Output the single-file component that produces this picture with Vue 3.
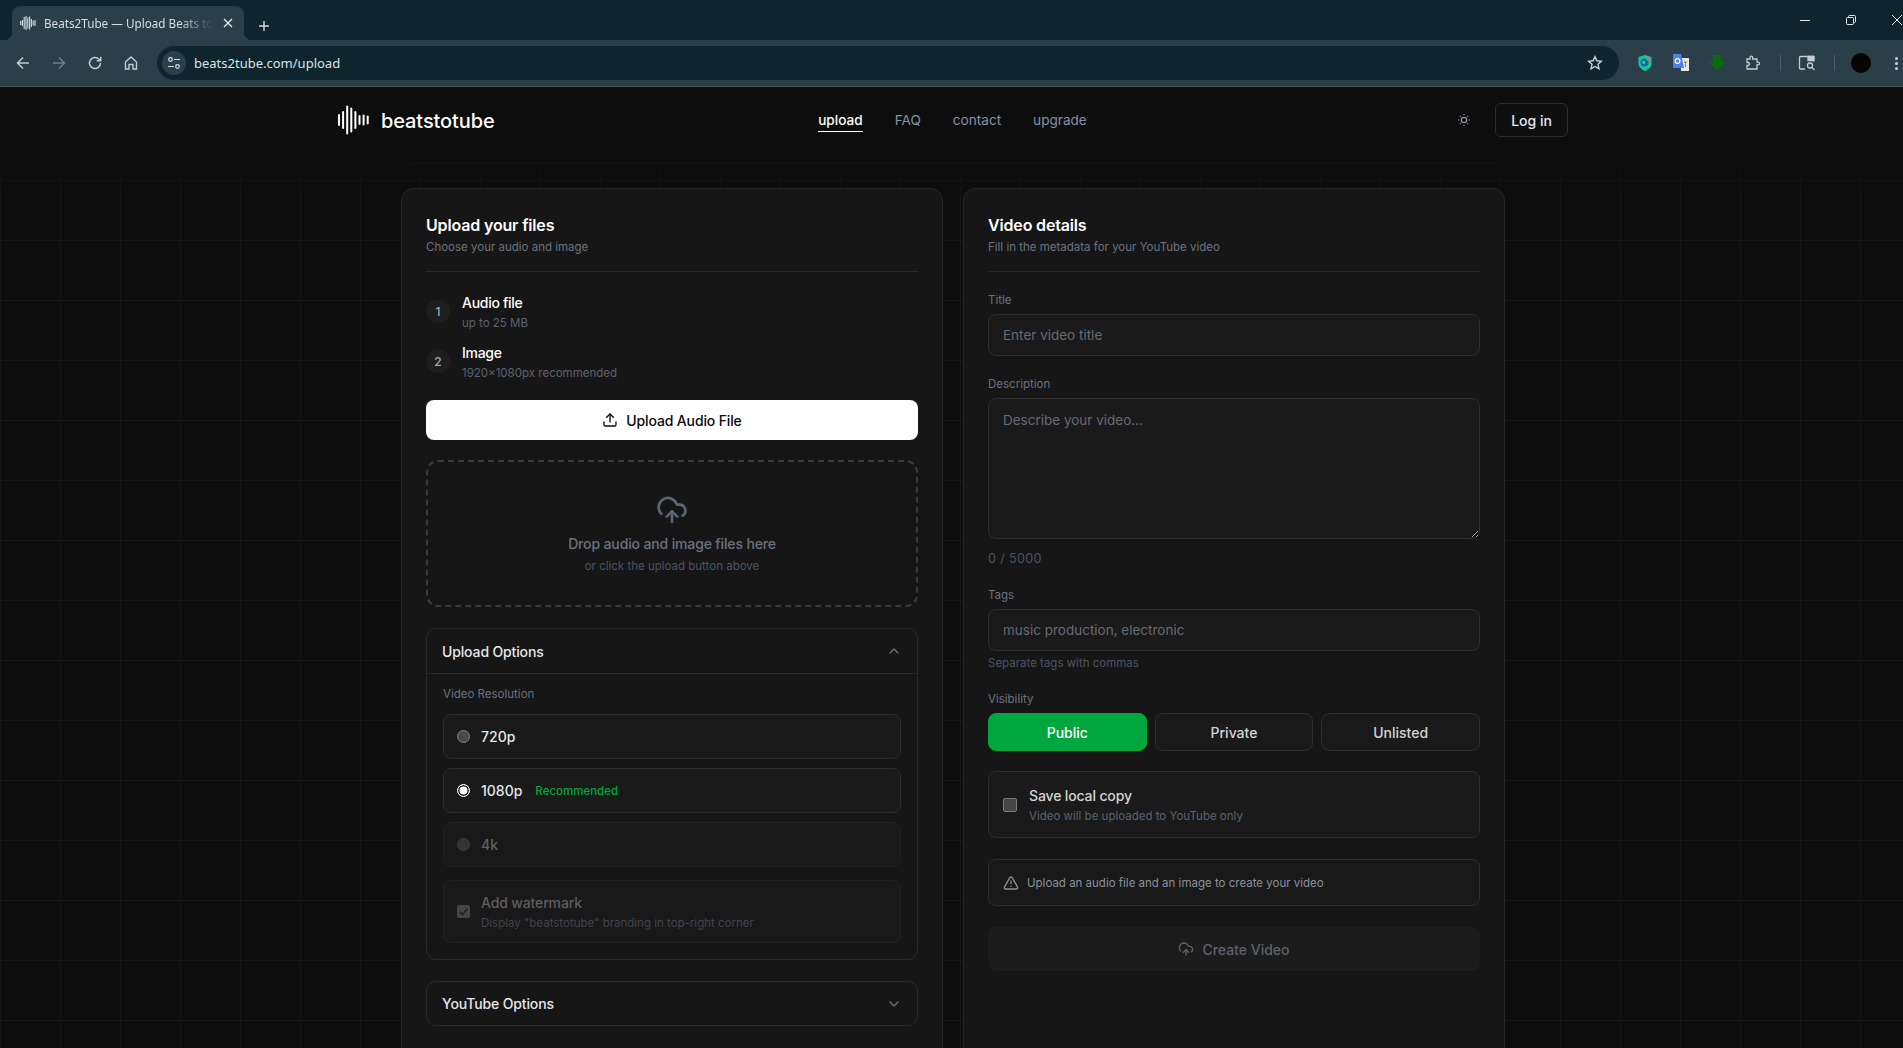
<script setup>
import { ref } from "vue";

// bar heights for the waveform logo, centred on one line
const logoBars = [12, 18, 29, 25, 18, 10, 11, 9];
const tabBars = [4, 6, 12, 14, 11, 13, 8, 5, 6];

const steps = [
  { n: 1, title: "Audio file", sub: "up to 25 MB" },
  { n: 2, title: "Image", sub: "1920×1080px recommended" },
];

const navLinks = ["upload", "FAQ", "contact", "upgrade"];
const resolution = ref("1080p");
const visibility = ref("Public");
const visibilityOptions = ["Public", "Private", "Unlisted"];
const saveLocal = ref(false);
const title = ref("");
const description = ref("");
const tags = ref("");
</script>

<template>
  <div class="window">
    <div class="tabstrip">
      <div class="tab">
        <svg class="favicon" width="16" height="14" viewBox="0 0 16 14">
          <rect
            v-for="(h, i) in tabBars"
            :key="i"
            :x="i * 1.8"
            :y="7 - h / 2"
            width="1.2"
            :height="h"
            fill="#c9d2d6"
          />
        </svg>
        <span class="tab-title">Beats2Tube — Upload Beats to</span>
        <svg class="tab-close" width="10" height="10" viewBox="0 0 10 10">
          <path d="M1 1l8 8M9 1l-8 8" stroke="#e3e8ea" stroke-width="1.4" />
        </svg>
      </div>
      <svg class="new-tab" width="12" height="12" viewBox="0 0 12 12">
        <path d="M6 1v10M1 6h10" stroke="#d5dcdf" stroke-width="1.4" />
      </svg>
      <div class="win-controls">
        <svg width="12" height="12" viewBox="0 0 12 12"><path d="M1 6.5h10" stroke="#e6eaec" /></svg>
        <svg width="12" height="12" viewBox="0 0 12 12" fill="none" stroke="#e6eaec">
          <rect x="1.5" y="3.5" width="7" height="7" rx="1" />
          <path d="M3.5 3.5v-1a1 1 0 0 1 1-1h5a1 1 0 0 1 1 1v5a1 1 0 0 1-1 1h-1" />
        </svg>
        <svg width="12" height="12" viewBox="0 0 12 12"><path d="M1 1l10 10M11 1L1 11" stroke="#e6eaec" /></svg>
      </div>
    </div>

    <div class="toolbar">
      <svg class="tool" width="16" height="16" viewBox="0 0 16 16" fill="none" stroke="#c3ced3" stroke-width="1.5">
        <path d="M14 8H2.5M8 2.5 2.5 8 8 13.5" />
      </svg>
      <svg class="tool" width="16" height="16" viewBox="0 0 16 16" fill="none" stroke="#6d7f87" stroke-width="1.5">
        <path d="M2 8h11.5M8 2.5 13.5 8 8 13.5" />
      </svg>
      <svg class="tool" width="16" height="16" viewBox="0 0 16 16" fill="none" stroke="#c3ced3" stroke-width="1.5">
        <path d="M13.5 8A5.5 5.5 0 1 1 11.8 4L13.5 5.6" />
        <path d="M13.7 1.8v4h-4" />
      </svg>
      <svg class="tool" width="16" height="16" viewBox="0 0 16 16" fill="none" stroke="#c3ced3" stroke-width="1.4">
        <path d="M2.5 7 8 2l5.5 5v7H10V9.5H6V14H2.5z" />
      </svg>
      <div class="omnibox">
        <span class="site-chip">
          <svg width="14" height="14" viewBox="0 0 14 14" fill="none" stroke="#d5dde0" stroke-width="1.2">
            <circle cx="3.5" cy="3.5" r="1.8" />
            <path d="M7 3.5h6M1 10.5h6" />
            <circle cx="10.5" cy="10.5" r="1.8" />
          </svg>
        </span>
        <span class="url">beats2tube.com/upload</span>
        <svg class="star" width="16" height="16" viewBox="0 0 16 16" fill="none" stroke="#c9d2d6" stroke-width="1.4">
          <path d="M8 1.6l1.9 4.2 4.5.5-3.4 3 1 4.5L8 11.5l-4 2.3 1-4.5-3.4-3 4.5-.5z" />
        </svg>
      </div>
      <div class="extensions">
        <span class="ext">
          <svg width="16" height="18" viewBox="0 0 16 18">
            <path d="M8 1l6.5 2v6c0 4-3 6.5-6.5 8C4.5 15.5 1.5 13 1.5 9V3z" fill="#16c79a" />
            <circle cx="7.5" cy="8.5" r="4" fill="#1468a8" />
            <path d="M5 7h3v3H6z" fill="#38d27c" />
            <circle cx="11.5" cy="5.5" r="1.8" fill="#e9647a" />
          </svg>
        </span>
        <span class="ext">
          <svg width="18" height="18" viewBox="0 0 18 18">
            <path d="M8 4h9v13H9z" fill="#e6e6e6" />
            <path d="M1 0h8l3 14H1z" fill="#4a80e8" />
            <circle cx="5.5" cy="7" r="2.4" fill="none" stroke="#fff" stroke-width="1.2" />
            <path d="M12 8h3M13.5 8v5" stroke="#777" stroke-width="1" />
          </svg>
        </span>
        <span class="ext">
          <svg width="18" height="16" viewBox="0 0 18 16">
            <path d="M5 0h8v7h4l-8 8.5L1 7h4z" fill="#0a6b0a" />
          </svg>
        </span>
        <span class="ext">
          <svg width="16" height="16" viewBox="0 0 16 16" fill="none" stroke="#c3ced3" stroke-width="1.3">
            <path d="M2 4h3V2.5a1.3 1.3 0 0 1 2.6 0V4H12v3.2h1.2a1.3 1.3 0 0 1 0 2.6H12V14H2v-3.5h1a1.5 1.5 0 0 0 0-3H2z" />
          </svg>
        </span>
        <span class="ext-sep"><i></i></span>
        <span class="ext">
          <svg width="18" height="16" viewBox="0 0 18 16" fill="none" stroke="#c3ced3" stroke-width="1.3">
            <path d="M7 14H2.5a1 1 0 0 1-1-1V2.5a1 1 0 0 1 1-1H15.5v5" />
            <path d="M10 1.5h6v4h-6z" fill="#c3ced3" />
            <circle cx="12" cy="10.5" r="2.5" />
            <path d="M14 12.5l2.5 2.5" />
          </svg>
        </span>
        <span class="ext-sep"><i></i></span>
        <span class="ext"><span class="avatar"></span></span>
        <span class="dots"><i></i><i></i><i></i></span>
      </div>
    </div>

    <div class="page">
      <header class="site-header">
        <div class="brand">
          <svg class="brand-mark" width="32" height="30" viewBox="0 0 32 30">
            <rect
              v-for="(h, i) in logoBars"
              :key="i"
              :x="1 + i * 4.1"
              :y="15 - h / 2"
              width="2"
              :height="h"
              rx="1"
              fill="#fff"
            />
          </svg>
          <span class="brand-name">beatstotube</span>
        </div>
        <nav class="nav">
          <a v-for="(link, i) in navLinks" :key="link" :class="{ active: i === 0 }">{{ link }}</a>
        </nav>
        <div class="header-right">
          <svg width="16" height="16" viewBox="0 0 24 24" fill="none" stroke="#8d96a3" stroke-width="2" stroke-linecap="round">
            <circle cx="12" cy="12" r="4" />
            <path d="M12 4h.01M20 12h.01M12 20h.01M4 12h.01M17.657 6.343h.01M17.657 17.657h.01M6.343 17.657h.01M6.343 6.343h.01" />
          </svg>
          <button class="login">Log in</button>
        </div>
      </header>

      <div class="stage">
        <div class="stage-edge"></div>
        <main class="columns">
          <section class="card">
            <div class="card-head">
              <h2>Upload your files</h2>
              <p>Choose your audio and image</p>
            </div>

            <div class="steps">
              <div v-for="step in steps" :key="step.n" class="step">
                <span class="step-num">{{ step.n }}</span>
                <div class="step-text">
                  <div class="step-title">{{ step.title }}</div>
                  <div class="step-sub">{{ step.sub }}</div>
                </div>
              </div>
            </div>

            <button class="upload-btn">
              <svg width="16" height="16" viewBox="0 0 24 24" fill="none" stroke="currentColor" stroke-width="2" stroke-linecap="round" stroke-linejoin="round">
                <path d="M12 3v12" />
                <path d="m17 8-5-5-5 5" />
                <path d="M21 15v4a2 2 0 0 1-2 2H5a2 2 0 0 1-2-2v-4" />
              </svg>
              Upload Audio File
            </button>

            <div class="dropzone">
              <svg width="32" height="32" viewBox="0 0 24 24" fill="none" stroke="#5d6675" stroke-width="2" stroke-linecap="round" stroke-linejoin="round">
                <path d="M12 13v8" />
                <path d="M4 14.899A7 7 0 1 1 15.71 8h1.79a4.5 4.5 0 0 1 2.5 8.242" />
                <path d="m8 17 4-4 4 4" />
              </svg>
              <div class="drop-title">Drop audio and image files here</div>
              <div class="drop-sub">or click the upload button above</div>
            </div>

            <div class="panel">
              <div class="panel-head with-line">
                <span>Upload Options</span>
                <svg width="16" height="16" viewBox="0 0 24 24" fill="none" stroke="#6b7280" stroke-width="2" stroke-linecap="round" stroke-linejoin="round">
                  <path d="m18 15-6-6-6 6" />
                </svg>
              </div>
              <div class="panel-body">
                <div class="field-label">Video Resolution</div>
                <div class="res-list">
                  <div class="res-row">
                    <span class="radio"></span>
                    <span class="res-name">720p</span>
                  </div>
                  <div class="res-row">
                    <span class="radio on"></span>
                    <span class="res-name">{{ resolution }}</span>
                    <span class="recommended">Recommended</span>
                  </div>
                  <div class="res-row disabled">
                    <span class="radio off"></span>
                    <span class="res-name">4k</span>
                  </div>
                </div>
                <div class="watermark">
                  <span class="checkbox checked">
                    <svg width="11" height="11" viewBox="0 0 12 12" fill="none" stroke="#232323" stroke-width="2">
                      <path d="M2 6.5 5 9.5 10 3" />
                    </svg>
                  </span>
                  <div>
                    <div class="wm-title">Add watermark</div>
                    <div class="wm-sub">Display "beatstotube" branding in top-right corner</div>
                  </div>
                </div>
              </div>
            </div>

            <div class="panel second">
              <div class="panel-head">
                <span>YouTube Options</span>
                <svg width="16" height="16" viewBox="0 0 24 24" fill="none" stroke="#6b7280" stroke-width="2" stroke-linecap="round" stroke-linejoin="round">
                  <path d="m6 9 6 6 6-6" />
                </svg>
              </div>
            </div>
          </section>

          <section class="card">
            <div class="card-head">
              <h2>Video details</h2>
              <p>Fill in the metadata for your YouTube video</p>
            </div>

            <div class="form">
              <label class="field-label">Title</label>
              <input v-model="title" class="text-input" placeholder="Enter video title" />

              <label class="field-label gap">Description</label>
              <textarea v-model="description" class="text-input area" placeholder="Describe your video…"></textarea>
              <div class="counter">{{ description.length }} / 5000</div>

              <label class="field-label gap">Tags</label>
              <input v-model="tags" class="text-input" placeholder="music production, electronic" />
              <div class="hint">Separate tags with commas</div>

              <label class="field-label gap">Visibility</label>
              <div class="vis-row">
                <button
                  v-for="opt in visibilityOptions"
                  :key="opt"
                  class="vis-btn"
                  :class="{ selected: visibility === opt }"
                  @click="visibility = opt"
                >
                  {{ opt }}
                </button>
              </div>

              <div class="save-box" @click="saveLocal = !saveLocal">
                <span class="checkbox empty"></span>
                <div>
                  <div class="save-title">Save local copy</div>
                  <div class="save-sub">Video will be uploaded to YouTube only</div>
                </div>
              </div>

              <div class="notice">
                <svg width="16" height="16" viewBox="0 0 24 24" fill="none" stroke="#8b919b" stroke-width="2" stroke-linecap="round" stroke-linejoin="round">
                  <path d="m21.73 18-8-14a2 2 0 0 0-3.48 0l-8 14A2 2 0 0 0 4 21h16a2 2 0 0 0 1.73-3" />
                  <path d="M12 9v4" />
                  <path d="M12 17h.01" />
                </svg>
                <span>Upload an audio file and an image to create your video</span>
              </div>

              <button class="create-btn">
                <svg width="16" height="16" viewBox="0 0 24 24" fill="none" stroke="currentColor" stroke-width="2" stroke-linecap="round" stroke-linejoin="round">
                  <path d="M12 13v8" />
                  <path d="M4 14.899A7 7 0 1 1 15.71 8h1.79a4.5 4.5 0 0 1 2.5 8.242" />
                  <path d="m8 17 4-4 4 4" />
                </svg>
                Create Video
              </button>
            </div>
          </section>
        </main>
      </div>
    </div>
  </div>
</template>

<style>
html,
body {
  margin: 0;
  overflow: hidden;
  background: #0d0d0d;
}
</style>

<style scoped>
.window {
  height: 100vh;
  display: flex;
  flex-direction: column;
  overflow: hidden;
  font-family: Inter, "Liberation Sans", sans-serif;
}

/* browser chrome */
.tabstrip {
  height: 40px;
  flex: none;
  display: flex;
  align-items: flex-end;
  background: #0f252d;
  padding-left: 12px;
}
.tab {
  position: relative;
  width: 232px;
  height: 34px;
  box-sizing: border-box;
  display: flex;
  align-items: center;
  padding: 0 11px 0 8px;
  background: #2a3f47;
  border-radius: 8px 8px 0 0;
}
.tab::before,
.tab::after {
  content: "";
  position: absolute;
  bottom: 0;
  width: 8px;
  height: 8px;
}
.tab::before {
  left: -8px;
  background: radial-gradient(circle at 0 0, transparent 8px, #2a3f47 8.5px);
}
.tab::after {
  right: -8px;
  background: radial-gradient(circle at 100% 0, transparent 8px, #2a3f47 8.5px);
}
.favicon {
  flex: none;
}
.tab-title {
  margin-left: 8px;
  flex: 1;
  white-space: nowrap;
  font: 11.7px "Noto Sans", sans-serif;
  color: #d7dfe2;
  -webkit-mask-image: linear-gradient(90deg, #000 80%, transparent);
  mask-image: linear-gradient(90deg, #000 80%, transparent);
}
.tab-close {
  margin-left: 10px;
  flex: none;
}
.new-tab {
  margin: 0 0 8px 14px;
}
.win-controls {
  margin-left: auto;
  align-self: stretch;
  display: flex;
  align-items: center;
  gap: 34px;
}
.toolbar {
  height: 47px;
  box-sizing: border-box;
  flex: none;
  display: flex;
  align-items: center;
  background: #2a3f47;
  border-bottom: 1px solid #45565d;
  padding-left: 15px;
}
.tool {
  margin-right: 20px;
  flex: none;
}
.omnibox {
  margin-left: -2px;
  width: 1462px;
  height: 34px;
  flex: none;
  display: flex;
  align-items: center;
  background: #0f252d;
  border-radius: 17px;
  padding: 0 16px 0 5px;
  box-sizing: border-box;
}
.site-chip {
  width: 24px;
  height: 24px;
  border-radius: 50%;
  background: #2a3f47;
  display: flex;
  align-items: center;
  justify-content: center;
}
.url {
  margin-left: 8px;
  font: 13px "Noto Sans", sans-serif;
  color: #d7e2e6;
}
.star {
  margin-left: auto;
}
.extensions {
  margin-left: 8px;
  display: flex;
  align-items: center;
}
.ext {
  width: 36px;
  display: flex;
  align-items: center;
  justify-content: center;
}
.ext-sep {
  width: 18px;
  display: flex;
  justify-content: center;
}
.ext-sep i {
  width: 1px;
  height: 16px;
  background: #4c5e65;
}
.avatar {
  width: 20px;
  height: 20px;
  border-radius: 50%;
  background: #050505;
}
.dots {
  display: flex;
  flex-direction: column;
  gap: 2px;
  margin-left: 16px;
}
.dots i {
  width: 3px;
  height: 3px;
  border-radius: 50%;
  background: #c9d2d6;
}

/* site */
.page {
  flex: 1;
  min-height: 0;
  background: #0d0d0d;
}
.site-header {
  height: 66px;
  box-sizing: border-box;
  padding-left: 337px;
  padding-right: 335px;
  display: grid;
  grid-template-columns: 1fr auto 1fr;
  align-items: center;
}
.brand {
  display: flex;
  align-items: center;
  gap: 12px;
}
.brand-name {
  padding-top: 2px;
  font-size: 20px;
  font-weight: 500;
  letter-spacing: -0.005em;
  color: #fff;
}
.nav {
  margin-top: 1px;
  display: flex;
  gap: 32px;
  font-size: 13.6px;
  color: #8593a5;
}
.nav a {
  padding-bottom: 1px;
  line-height: 20px;
}
.nav a.active {
  color: #fff;
  font-weight: 500;
  border-bottom: 1px solid #fff;
}
.header-right {
  justify-self: end;
  display: flex;
  align-items: center;
  gap: 23px;
}
.login {
  width: 73px;
  height: 34px;
  background: #0f0f0f;
  border: 1px solid #2c2c2c;
  border-radius: 6px;
  font: 500 14px Inter, sans-serif;
  color: #e2e8f0;
  padding: 0;
}
.stage {
  height: 100%;
  background-color: #0d0d0d;
  background-image: linear-gradient(#0d0d0d 11px, transparent 42px),
    linear-gradient(rgba(255, 255, 255, 0.035) 1px, transparent 1px),
    linear-gradient(90deg, rgba(255, 255, 255, 0.035) 1px, transparent 1px);
  background-size: 100% 60px, 60px 60px, 60px 60px;
  background-position: 0 0, 0 27px, 0 0;
  background-repeat: no-repeat, repeat, repeat;
}
.stage-edge {
  width: 1104px;
  height: 11px;
  box-sizing: border-box;
  margin: 0 0 24px 401px;
  background: #0d0d0d;
  border-bottom: 1px solid #121212;
  border-left: 1px solid #121212;
  border-right: 1px solid #121212;
  border-radius: 0 0 12px 12px;
}
.columns {
  width: 1104px;
  margin-left: 401px;
  display: grid;
  grid-template-columns: 542px 542px;
  gap: 20px;
}
.card {
  box-sizing: border-box;
  min-height: 1000px;
  background: #161616;
  border: 1px solid #252525;
  border-radius: 12px;
  padding: 24px;
}
.card-head {
  padding-bottom: 16px;
  border-bottom: 1px solid #282828;
}
.card-head h2 {
  margin: 0;
  font-size: 16px;
  line-height: 24px;
  font-weight: 600;
  letter-spacing: -0.01em;
  color: #fff;
}
.card-head p {
  margin: 2px 0 0;
  font-size: 11.5px;
  line-height: 16px;
  color: #6b7280;
}

.steps {
  margin-top: 20px;
  display: flex;
  flex-direction: column;
  gap: 12px;
}
.step {
  display: flex;
  align-items: center;
  gap: 12px;
}
.step-text {
  margin: 1px 0 -1px;
}
.step-num {
  width: 24px;
  height: 24px;
  border-radius: 50%;
  background: #1e1e1e;
  display: flex;
  align-items: center;
  justify-content: center;
  font-size: 12px;
  font-weight: 500;
  color: #a1a8b3;
}
.step-title {
  font-size: 14px;
  line-height: 20px;
  font-weight: 500;
  letter-spacing: -0.02em;
  color: #fff;
}
.step-sub {
  margin-top: 2px;
  font-size: 11.5px;
  line-height: 16px;
  color: #5b6370;
}
.upload-btn {
  margin-top: 20px;
  width: 100%;
  height: 40px;
  display: flex;
  align-items: center;
  justify-content: center;
  gap: 8px;
  background: #fff;
  border: 0;
  border-radius: 8px;
  font: 500 14px Inter, sans-serif;
  letter-spacing: -0.01em;
  color: #0a0a0a;
}
.dropzone {
  margin-top: 20px;
  height: 147px;
  box-sizing: border-box;
  display: flex;
  flex-direction: column;
  align-items: center;
  padding-top: 32px;
  border: 2px dashed #3a3a3a;
  border-radius: 12px;
}
.drop-title {
  margin-top: 8px;
  font-size: 14px;
  line-height: 20px;
  font-weight: 500;
  letter-spacing: -0.01em;
  color: #6b7280;
}
.drop-sub {
  margin-top: 4px;
  font-size: 11.5px;
  line-height: 16px;
  color: #4b5563;
}
.panel {
  margin-top: 21px;
  border: 1px solid #2a2a2a;
  border-radius: 10px;
}
.panel-head {
  height: 44px;
  display: flex;
  align-items: center;
  justify-content: space-between;
  padding: 0 15px;
  font-size: 14px;
  font-weight: 500;
  letter-spacing: -0.01em;
  color: #e5e7eb;
}
.panel-head.with-line {
  border-bottom: 1px solid #2a2a2a;
}
.panel-body {
  padding: 12px 16px 16px;
}
.field-label {
  display: block;
  font-size: 11.5px;
  line-height: 16px;
  color: #6b7280;
}
.res-list {
  margin-top: 12px;
  display: flex;
  flex-direction: column;
  gap: 9px;
}
.res-row {
  height: 45px;
  box-sizing: border-box;
  display: flex;
  align-items: center;
  padding-left: 13px;
  background: #1a1a1a;
  border: 1px solid #2c2c2c;
  border-radius: 8px;
}
.res-row.disabled {
  background: #191919;
  border-color: #222;
}
.radio {
  width: 13px;
  height: 13px;
  box-sizing: border-box;
  border-radius: 50%;
  background: #4a4a4a;
  border: 1px solid #808080;
}
.radio.on {
  background: #fff;
  border: 1px solid #fff;
  box-shadow: inset 0 0 0 1.5px #1a1a1a;
}
.radio.off {
  background: #333;
  border-color: #3c3c3c;
}
.res-name {
  margin-left: 11px;
  font-size: 14px;
  font-weight: 500;
  color: #e5e7eb;
}
.disabled .res-name {
  color: #606060;
}
.recommended {
  margin-left: 13px;
  font-size: 11.5px;
  font-weight: 500;
  color: #00a63e;
}
.watermark {
  margin-top: 13px;
  height: 63px;
  box-sizing: border-box;
  display: flex;
  align-items: center;
  gap: 11px;
  padding-left: 13px;
  background: #191919;
  border: 1px solid #222;
  border-radius: 8px;
}
.checkbox {
  flex: none;
  display: flex;
  align-items: center;
  justify-content: center;
  box-sizing: border-box;
  border-radius: 2px;
}
.checkbox.checked {
  width: 13px;
  height: 13px;
  background: #454545;
}
.checkbox.empty {
  width: 14px;
  height: 14px;
  background: #454545;
  border: 1px solid #7b7b7b;
}
.wm-title {
  font-size: 14px;
  line-height: 20px;
  font-weight: 500;
  letter-spacing: -0.01em;
  color: #5f5f5f;
}
.wm-sub {
  font-size: 11.5px;
  line-height: 16px;
  margin-top: 2px;
  color: #41454c;
}
.panel.second .panel-head {
  height: 43px;
}

.form {
  margin-top: 20px;
}
.field-label.gap {
  margin-top: 20px;
}
.text-input {
  display: block;
  margin-top: 6px;
  width: 100%;
  height: 42px;
  box-sizing: border-box;
  padding: 0 14px;
  background: #1a1a1a;
  border: 1px solid #2e2e2e;
  border-radius: 8px;
  outline: none;
  font: 13.5px Inter, sans-serif;
  color: #e5e7eb;
}
.text-input::placeholder {
  color: #656b75;
  opacity: 1;
}
.area {
  height: 141px;
  padding-top: 11px;
  line-height: 20px;
  resize: vertical;
}
.counter {
  margin-top: 12px;
  font-size: 12.5px;
  line-height: 16px;
  letter-spacing: 0.4px;
  color: #4b5563;
}
.hint {
  margin-top: 4px;
  font-size: 11.5px;
  line-height: 16px;
  color: #4b5563;
}
.vis-row {
  margin-top: 6px;
  display: grid;
  grid-template-columns: repeat(3, 1fr);
  gap: 8px;
}
.vis-btn {
  height: 38px;
  background: #1a1a1a;
  border: 1px solid #2e2e2e;
  border-radius: 8px;
  font: 500 14px Inter, sans-serif;
  color: #d4d4d4;
  padding: 0;
}
.vis-btn.selected {
  background: #00a63e;
  border-color: #00a63e;
  color: #fff;
}
.save-box {
  margin-top: 20px;
  height: 67px;
  box-sizing: border-box;
  display: flex;
  align-items: center;
  gap: 12px;
  padding-left: 14px;
  background: #1a1a1a;
  border: 1px solid #2e2e2e;
  border-radius: 8px;
}
.save-title {
  font-size: 14px;
  line-height: 20px;
  font-weight: 500;
  letter-spacing: -0.01em;
  color: #d4d4d4;
}
.save-sub {
  margin-top: 2px;
  font-size: 11.5px;
  line-height: 16px;
  color: #5b6370;
}
.notice {
  margin-top: 21px;
  height: 47px;
  box-sizing: border-box;
  display: flex;
  align-items: center;
  gap: 8px;
  padding-left: 14px;
  background: #191919;
  border: 1px solid #2e2e2e;
  border-radius: 8px;
  font-size: 11.5px;
  color: #8b919b;
}
.create-btn {
  margin-top: 21px;
  width: 100%;
  height: 44px;
  display: flex;
  align-items: center;
  justify-content: center;
  gap: 8px;
  background: #1c1c1c;
  border: 0;
  border-radius: 8px;
  font: 500 14px Inter, sans-serif;
  color: #5d636d;
}
</style>
